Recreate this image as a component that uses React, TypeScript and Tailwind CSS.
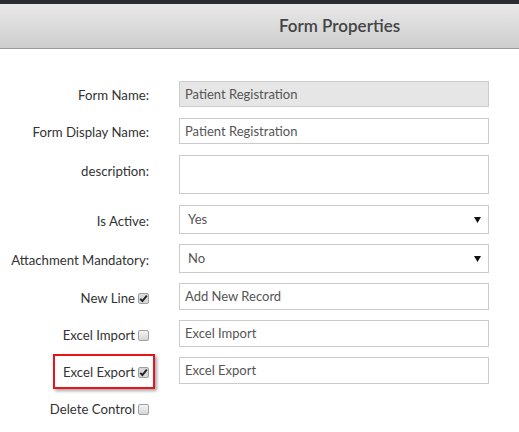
import React from "react";

const font = { fontFamily: "Lato, 'Open Sans', sans-serif" };

function Check({ checked }: { checked: boolean }) {
  return (
    <span
      className={
        "inline-flex items-center justify-center w-[11px] h-[11px] rounded-[2px] border border-[#a0a0a0] ml-[3px] " +
        (checked ? "bg-[#d9d9d9]" : "bg-gradient-to-b from-[#f4f4f4] to-[#d6d6d6]")
      }
    >
      {checked && (
        <svg width="9" height="9" viewBox="0 0 9 9">
          <path d="M1.2 4.8 L3.4 7 L7.8 1.6" stroke="#222" strokeWidth="1.9" fill="none" />
        </svg>
      )}
    </span>
  );
}

function Label({ children, top }: { children: React.ReactNode; top?: boolean }) {
  return (
    <div
      className={
        "w-[150px] shrink-0 flex justify-end pr-[1px] text-[13.2px] text-[#333] " +
        (top ? "items-start pt-[7px]" : "items-center pt-[4px]")
      }
    >
      {children}
    </div>
  );
}

function Input({ value, gray, h = "h-[26px]" }: { value?: string; gray?: boolean; h?: string }) {
  return (
    <div
      className={
        "w-[310px] border border-[#cccccc] flex items-center pl-[5px] pt-[1px] text-[13px] text-[#555] " +
        h +
        (gray ? " bg-[#e6e6e6]" : " bg-white")
      }
    >
      {value}
    </div>
  );
}

function Select({ value }: { value: string }) {
  return (
    <div className="w-[310px] h-[29px] border border-[#cccccc] flex items-center justify-between pl-[8px] pr-[7px] text-[13px] text-[#555] bg-white">
      <span>{value}</span>
      <svg width="7" height="6" viewBox="0 0 7 6">
        <path d="M0 0 H7 L3.5 6 Z" fill="#111" />
      </svg>
    </div>
  );
}

export default function App() {
  return (
    <div className="w-[519px] h-[432px] bg-white overflow-hidden" style={font}>
      <div className="h-[4px] bg-[#2b2b33]" />
      <div className="h-[45px] bg-gradient-to-b from-[#e9e9e9] to-[#cdcdcd] border-b border-[#9a9a9a] flex items-center justify-center pl-[160px]">
        <span className="text-[17px] font-semibold text-[#444]">Form Properties</span>
      </div>
      <div className="pt-[32px] flex flex-col">
        <div className="flex gap-[29px] mb-[11px]">
          <Label>Form Name:</Label>
          <Input value="Patient Registration" gray />
        </div>
        <div className="flex gap-[29px] mb-[11px]">
          <Label>Form Display Name:</Label>
          <Input value="Patient Registration" />
        </div>
        <div className="flex gap-[29px] mb-[11px]">
          <Label top>description:</Label>
          <Input h="h-[39px]" />
        </div>
        <div className="flex gap-[29px] mb-[10px]">
          <Label>Is Active:</Label>
          <Select value="Yes" />
        </div>
        <div className="flex gap-[29px] mb-[10px]">
          <Label>Attachment Mandatory:</Label>
          <Select value="No" />
        </div>
        <div className="flex gap-[29px] mb-[10px]">
          <Label>
            New Line <Check checked />
          </Label>
          <Input value="Add New Record" h="h-[27px]" />
        </div>
        <div className="flex gap-[29px] mb-[10px]">
          <Label>
            Excel Import <Check checked={false} />
          </Label>
          <Input value="Excel Import" h="h-[27px]" />
        </div>
        <div className="flex gap-[29px] mb-[10px]">
          <Label>
            <span className="relative flex items-center">
              <span className="absolute left-[-10px] right-[-6px] top-[-9px] bottom-[-7px] border-2 border-[#e8141c] shadow-[2px_2px_3px_rgba(0,0,0,0.35)]" />
              Excel Export <Check checked />
            </span>
          </Label>
          <Input value="Excel Export" h="h-[27px]" />
        </div>
        <div className="flex gap-[29px] h-[27px]">
          <Label>
            Delete Control <Check checked={false} />
          </Label>
        </div>
      </div>
    </div>
  );
}
